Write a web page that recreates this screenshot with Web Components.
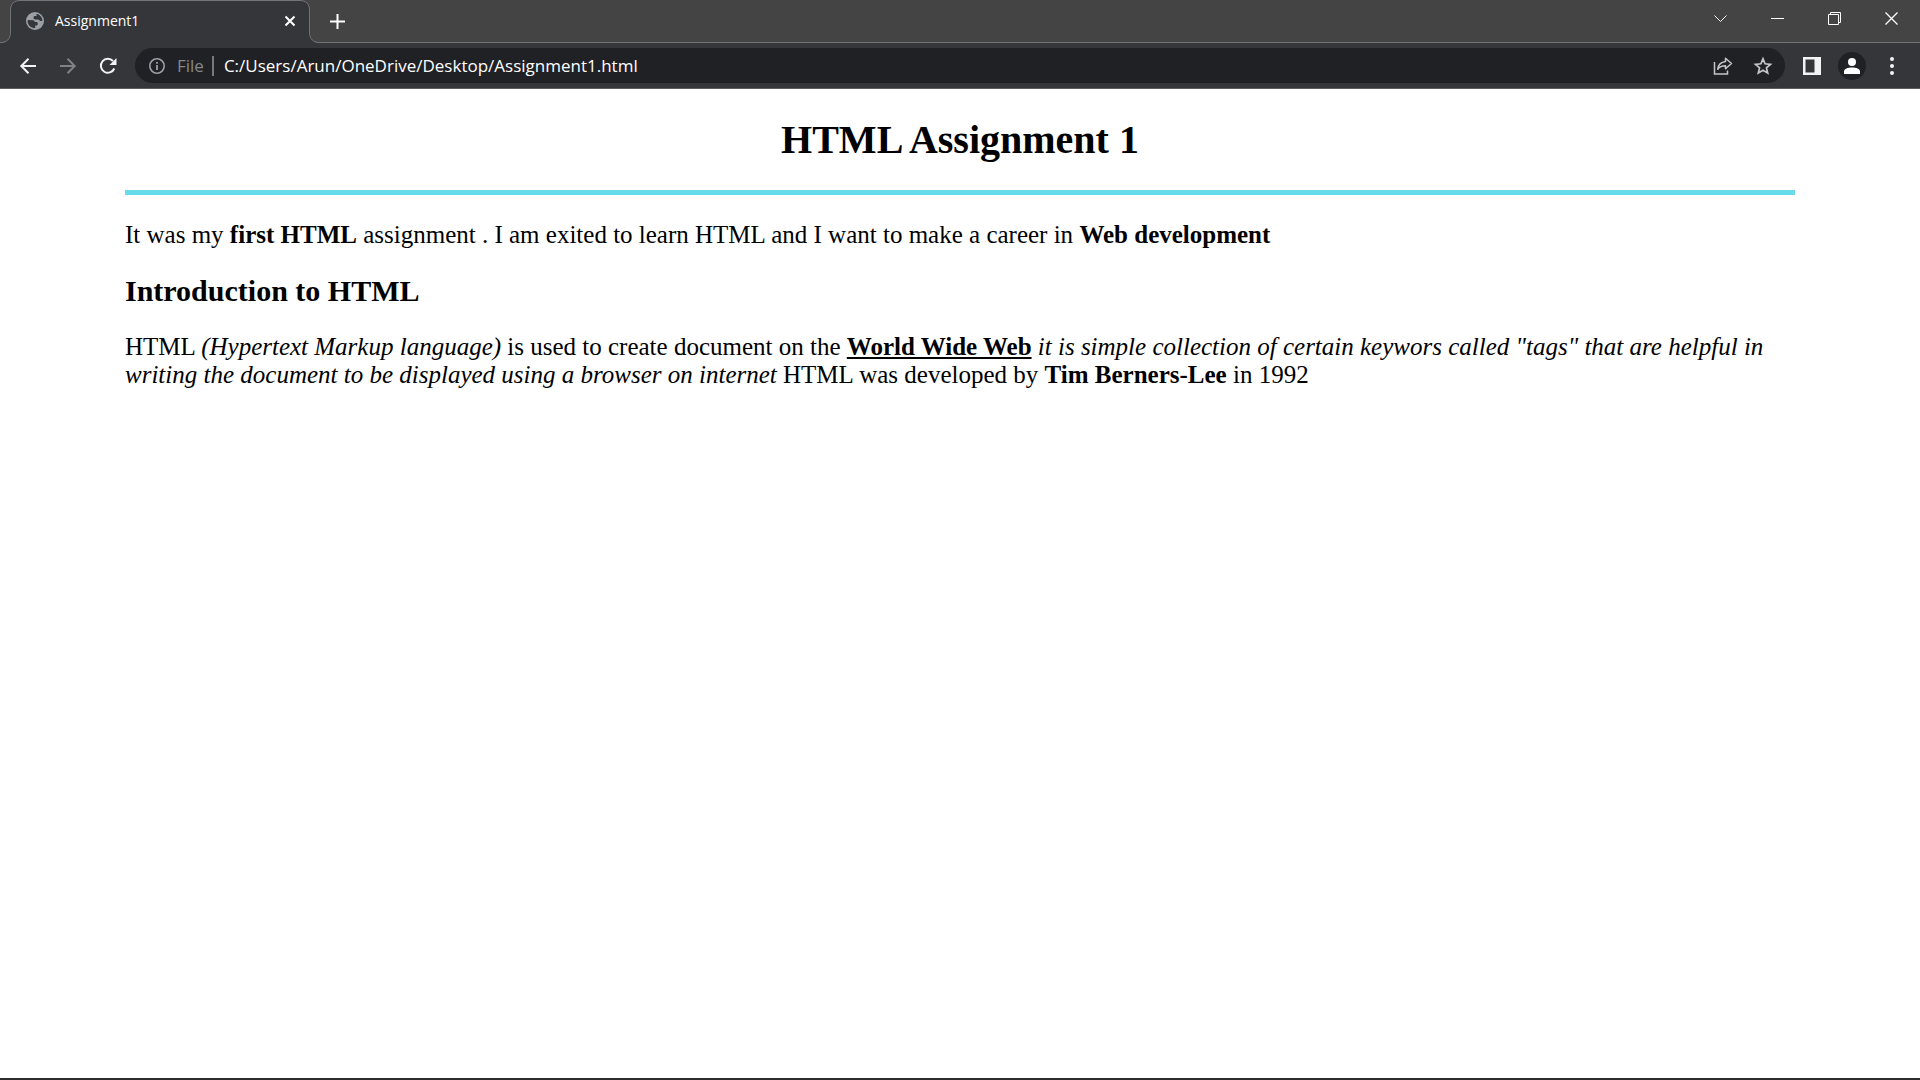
<!DOCTYPE html>
<html lang="en">
<head>
<meta charset="utf-8">
<title>Assignment1</title>
<style>
html, body { height: 100%; }
body { margin: 0; background: #fff; }
</style>
</head>
<body>
<browser-window>
  <tab-strip slot="chrome"><browser-tab>Assignment1</browser-tab></tab-strip>
  <tool-bar slot="chrome"></tool-bar>
  <assignment-page>
    <span slot="title">HTML Assignment 1</span>
  </assignment-page>
</browser-window>

<script>
const buttonReset = `
  *, *::before, *::after { box-sizing: border-box; }
  button { margin: 0; padding: 0; border: 0; background: none; color: inherit; font: inherit;
    display: flex; align-items: center; justify-content: center; flex: none; }
  svg { display: block; flex: none; overflow: visible; fill: none; stroke: currentColor; }
`;

function define(name, html) {
  const template = document.createElement('template');
  template.innerHTML = html;
  customElements.define(name, class extends HTMLElement {
    constructor() {
      super();
      this.attachShadow({ mode: 'open' }).append(template.content.cloneNode(true));
    }
  });
}

define('browser-window', `
<style>
  :host { display: flex; flex-direction: column; min-height: 100vh; box-sizing: border-box;
    border-bottom: 2px solid #2d2b2e; background: #fff;
    font-family: "Open Sans", "Noto Sans", sans-serif; color: #fff; }
  main { flex: 1; }
</style>
<header><slot name="chrome"></slot></header>
<main><slot></slot></main>`);

define('tab-strip', `
<style>${buttonReset}
  :host { display: flex; height: 43px; box-sizing: border-box; background:
    linear-gradient(#737476, #737476) bottom / 100% 1px no-repeat #444; }
  .new { width: 34px; height: 42px; }
  .controls { display: flex; margin-left: auto; height: 37px; }
  .controls button { width: 57px; height: 37px; }
</style>
<slot></slot>
<button class="new" aria-label="New tab"><svg width="15" height="15" stroke-width="2"><path d="M7.500 0v15M0 7.500h15"/></svg></button>
<div class="controls">
  <button aria-label="Search tabs"><svg width="13" height="13" stroke="#d8d8d8"><path d="M.5 3.500l6 6 6-6"/></svg></button>
  <button aria-label="Minimize"><svg width="13" height="13"><path d="M0 6.500h13"/></svg></button>
  <button aria-label="Restore"><svg width="13" height="13"><path d="M.5 2.500h10v10H.5zM2.500 2.500v-2h10v10h-2"/></svg></button>
  <button aria-label="Close window"><svg width="13" height="13" stroke-width="1.300"><path d="M.5.5l12 12M12.500.5l-12 12"/></svg></button>
</div>`);

define('browser-tab', `
<style>${buttonReset}
  :host { display: flex; position: relative; width: 320px; height: 43px; box-sizing: border-box;
    align-items: center; padding: 0 20px 2px 26px; gap: 11px; font-size: 14px; line-height: 20px; }
  .shape { position: absolute; inset: 0; }
  .label { position: relative; flex: 1; }
  .icon, button { position: relative; }
  button { width: 20px; height: 20px; }
</style>
<svg class="shape" width="320" height="43"><path fill="#35363a" stroke="none" d="M0 43C7 43 10.500 39 10.500 32V10C10.500 4 14 .5 20 .5H300C306 .5 309.500 4 309.500 10V32C309.500 39 313 43 320 43Z"/><path stroke="#737476" d="M0 42.500C7 42.500 10.500 39 10.500 32V10C10.500 4 14 .5 20 .5H300C306 .5 309.500 4 309.500 10V32C309.500 39 313 42.500 320 42.500"/></svg>
<svg class="icon" width="18" height="18"><circle cx="9" cy="9" r="9" fill="#9aa0a6" stroke="none"/><path fill="#35363a" stroke="none" d="M2 8l5 .3c1 .1 1.700.8 1.700 1.700h1.800c.8 0 1.200.6 1.200 1.300v.9c0 .8-.6 1.300-1.400 1.300H9.200v2.600C5 16.200 1.600 13 1.600 9zM10.500 1.700c3.200.7 5.500 3.300 6 6.500-.8.8-1.700 1.200-2.500.6l-1.600-1.300H9.500c-1.200 0-2-.7-2-1.700s.7-1.700 1.700-1.700h1.300z"/></svg>
<span class="label"><slot></slot></span>
<button aria-label="Close tab"><svg width="10" height="10" stroke-width="2"><path d="M.5.5l9 9M9.500.5l-9 9"/></svg></button>`);

define('tool-bar', `
<style>${buttonReset}
  :host { display: flex; align-items: center; height: 46px; box-sizing: border-box;
    padding: 0 8px; background: #35363a; border-bottom: 1px solid #5c5d60; color: #f1f3f4; }
  button { width: 40px; height: 36px; }
  .dim { color: #808184; }
  address-bar { flex: 1; margin: 0 7px; }
  .avatar span { display: flex; width: 28px; height: 28px; border-radius: 50%; background: #202124;
    align-items: center; justify-content: center; }
</style>
<button aria-label="Back"><svg width="16" height="16" stroke-width="2"><path d="M16 8H1.500M8.500.8L1.300 8l7.200 7.200"/></svg></button>
<button class="dim" aria-label="Forward"><svg width="16" height="16" stroke-width="2"><path d="M0 8h14.500M7.500.8L14.700 8l-7.200 7.200"/></svg></button>
<button aria-label="Reload"><svg width="18" height="18" stroke-width="2"><path d="M15.300 11.500A7 7 0 1 1 14 4"/><path fill="currentColor" stroke="none" d="M17.500 1v7h-7z"/></svg></button>
<address-bar></address-bar>
<button aria-label="Side panel"><svg width="18" height="18"><path fill="currentColor" stroke="none" fill-rule="evenodd" d="M0 0h18v18H0zM2.500 2.500v13h9v-13z"/></svg></button>
<button class="avatar" aria-label="Profile"><span><svg width="16" height="16"><g fill="#fff" stroke="none"><circle cx="8" cy="4" r="4"/><path d="M0 16v-2.500C0 10.800 4 9.500 8 9.500s8 1.300 8 4V16z"/></g></svg></span></button>
<button aria-label="Menu"><svg width="4" height="18"><g fill="currentColor" stroke="none"><circle cx="2" cy="2" r="2"/><circle cx="2" cy="9" r="2"/><circle cx="2" cy="16" r="2"/></g></svg></button>`);

define('address-bar', `
<style>${buttonReset}
  :host { display: flex; align-items: center; height: 35px; box-sizing: border-box;
    border-radius: 18px; background: #202124; padding: 0 2px 0 14px; font-size: 17px; line-height: 24px; }
  label { color: #85888c; padding: 0 8px 0 12px; }
  .rule { width: 2px; height: 20px; background: #77797c; }
  input { flex: 1; min-width: 0; margin: 0; padding: 0 0 0 10px; border: 0; outline: 0; background: none;
    font: inherit; color: #fff; height: 24px; }
  button { width: 40px; height: 35px; color: #c4c7c9; }
  .info { color: #9aa0a6; }
</style>
<svg class="info" width="16" height="16"><circle cx="8" cy="8" r="7.200" stroke-width="1.600"/><path stroke-width="1.800" d="M8 7v5M8 4v1.800"/></svg>
<label for="url">File</label><span class="rule"></span>
<input id="url" type="text" spellcheck="false" value="C:/Users/Arun/OneDrive/Desktop/Assignment1.html">
<button aria-label="Share"><svg width="20" height="18" stroke-width="1.500"><path d="M1.500 5v12h13v-3.500"/><path stroke-linejoin="round" d="M12.500 1.300l6 5.200-6 5.200V8.800c-3.500 0-6 .9-7.800 3.400.5-4.300 3-7.200 7.800-7.800z"/></svg></button>
<button aria-label="Bookmark"><svg width="18" height="18" stroke-width="1.700"><path d="M9 1.800l2.100 5 5.400.5-4.100 3.500 1.300 5.300L9 13.300l-4.700 2.800 1.300-5.300-4.100-3.500 5.400-.5z"/></svg></button>`);

define('assignment-page', `
<style>
  :host { display: block; padding: 27px 125px; color: #000;
    font-family: "Liberation Serif", serif; font-size: 25px; line-height: 28px; }
  h1 { margin: 0 0 26px; font-size: 40px; line-height: 48px; text-align: center; }
  hr { margin: 0; height: 5px; border: 0; background: #67dbe8; }
  h2 { margin: 26px 0; font-size: 30px; line-height: 32px; }
  p { margin: 26px 0; }
</style>
<h1><slot name="title"></slot></h1>
<hr>
<p>It was my <b>first HTML</b> assignment . I am exited to learn HTML and I want to make a career in <b>Web development</b></p>
<h2>Introduction to HTML</h2>
<p>HTML <i>(Hypertext Markup language)</i> is used to create document on the <b><u>World Wide Web</u></b> <i>it is simple collection of certain keywors called "tags" that are helpful in writing the document to be displayed using a browser on internet</i> HTML was developed by <b>Tim Berners-Lee</b> in 1992</p>`);
</script>
</body>
</html>
